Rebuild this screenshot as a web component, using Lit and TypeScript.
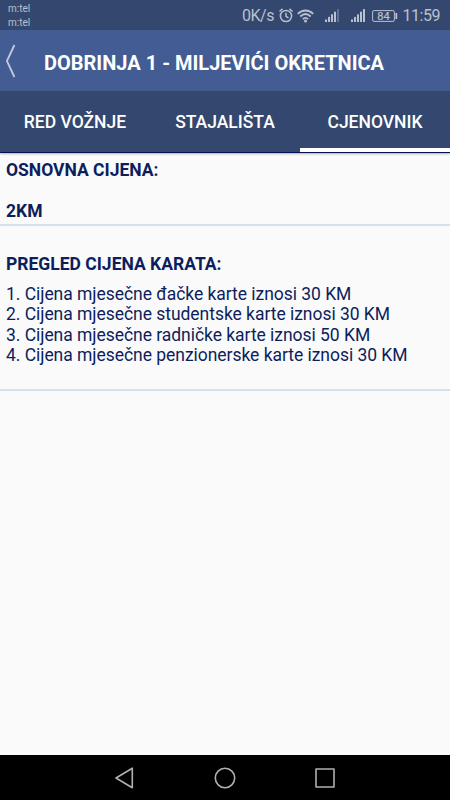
import { LitElement, html, css, svg } from "lit";
import { customElement, property, state } from "lit/decorators.js";
import { classMap } from "lit/directives/class-map.js";

@customElement("status-bar")
class StatusBar extends LitElement {
  static styles = css`
    :host { display: flex; height: 30px; background: #34486f; color: #b9c1d0; justify-content: space-between; box-sizing: border-box; padding: 0 10px 0 8px; }
    .carriers { font-size: 10px; line-height: 14px; padding-top: 2px; }
    .right { display: flex; align-items: center; height: 31px; font-size: 16px; }
    .speed { margin-right: 5.5px; letter-spacing: -0.5px; }
    .alarm { margin-right: 3.5px; }
    .wifi { margin-right: 11.5px; }
    .signal { margin-right: 11px; }
    .signal.full { margin-right: 5.5px; }
    .battery { margin-right: 4.5px; }
    svg { display: block; }
    .num { font-size: 11px; }
    .clock { letter-spacing: -0.45px; }
  `;
  bars(solid: number) {
    return svg`${[0, 1, 2, 3, 4].map(
      (i) => svg`<rect x=${i * 3} y=${10.5 - i * 2.6} width="2" height=${2.5 + i * 2.6} fill="#b9c1d0" opacity=${i < solid ? 1 : 0.35}></rect>`
    )}`;
  }
  render() {
    return html`
      <div class="carriers"><div>m:tel</div><div>m:tel</div></div>
      <div class="right">
        <span class="speed">0K/s</span>
        <svg class="alarm" width="14" height="15" viewBox="0 0 14 15" fill="none" stroke="#b9c1d0" stroke-width="1.5">
          <circle cx="7" cy="8" r="5.6"></circle>
          <path d="M7 4.8v3.5l2.5 1.6M.5 3.5l3-2.6M13.5 3.5l-3-2.6"></path>
        </svg>
        <svg class="wifi" width="17" height="14" viewBox="0 0 17 14" fill="none" stroke="#b9c1d0" stroke-width="1.8">
          <path d="M.8 4.8C5.3.4 11.7.4 16.2 4.8M3.3 7.5c3.2-3.1 7.2-3.1 10.4 0M5.8 10.1c1.7-1.6 3.7-1.6 5.4 0"></path>
          <circle cx="8.5" cy="12" r="1.5" fill="#b9c1d0" stroke="none"></circle>
        </svg>
        <svg class="signal" width="15" height="13" viewBox="0 0 15 13">${this.bars(4)}</svg>
        <svg class="signal full" width="15" height="13" viewBox="0 0 15 13">${this.bars(5)}</svg>
        <svg class="battery" width="26" height="12" viewBox="0 0 26 12">
          <rect x=".6" y=".6" width="21.8" height="10.8" rx="1.5" fill="none" stroke="#b9c1d0"></rect>
          <rect x="23.4" y="3" width="1.8" height="6" fill="#b9c1d0"></rect>
          <text class="num" x="11.5" y="9.9" text-anchor="middle" fill="#b9c1d0" stroke="#b9c1d0" stroke-width=".2">84</text>
        </svg>
        <span class="clock">11:59</span>
      </div>`;
  }
}

@customElement("title-bar")
class TitleBar extends LitElement {
  @property() heading = "";
  static styles = css`
    :host { display: flex; align-items: center; height: 61px; background: #435c93; color: #fff; padding-left: 5px; box-sizing: border-box; }
    .back { display: block; margin: 1px 28px 0 0; }
    .heading { font-size: 20px; font-weight: 700; white-space: nowrap; padding-top: 5px; }
  `;
  render() {
    return html`
      <svg class="back" width="11" height="34" viewBox="0 0 11 34" fill="none" stroke="#c3cbdc" stroke-width="1.8">
        <path d="M9.4 1L1.9 17l7.5 16"></path>
      </svg>
      <div class="heading">${this.heading}</div>`;
  }
}

@customElement("tab-strip")
class TabStrip extends LitElement {
  @state() active = 2;
  tabs = ["RED VOŽNJE", "STAJALIŠTA", "CJENOVNIK"];
  static styles = css`
    :host { display: grid; grid-template-columns: repeat(3, 1fr); height: 62px; box-sizing: border-box; background: #34486f; border-bottom: 1px solid #06104f; box-shadow: 0 1px 2px rgba(0, 0, 0, 0.3); }
    .tab { color: #fff; font-size: 17.5px; font-weight: 500; display: flex; align-items: center; justify-content: center; box-sizing: border-box; border-bottom: 4px solid transparent; padding-top: 4px; white-space: nowrap; }
    .active { border-bottom-color: #fff; }
  `;
  render() {
    return this.tabs.map(
      (t, i) => html`<div class=${classMap({ tab: true, active: i === this.active })} @click=${() => (this.active = i)}>${t}</div>`
    );
  }
}

@customElement("nav-bar")
class NavBar extends LitElement {
  static styles = css`
    :host { display: flex; justify-content: center; align-items: center; gap: 78px; height: 45px; background: #000; }
    svg { display: block; }
  `;
  render() {
    const icon = (shape: unknown) =>
      html`<svg width="22" height="22" viewBox="0 0 22 22" fill="none" stroke="#b0b0b0" stroke-width="1.6" stroke-linejoin="round">${shape}</svg>`;
    return html`
      ${icon(svg`<path d="M18.3 1.2v19.6L2 11z"></path>`)}
      ${icon(svg`<circle cx="11" cy="11" r="9.7"></circle>`)}
      ${icon(svg`<rect x="2" y="2" width="18" height="18"></rect>`)}`;
  }
}

@customElement("app-root")
class AppRoot extends LitElement {
  static styles = css`
    :host { display: flex; flex-direction: column; height: 800px; background: #fafafa; font-family: Roboto, sans-serif; color: #0d1e5c; overflow: hidden; }
    .body { flex: 1; font-size: 17.5px; line-height: 20.5px; }
    .section { border-bottom: 2px solid #d8e1ea; padding-left: 6px; box-sizing: border-box; }
    .base { height: 73px; padding-top: 7px; }
    .list { height: 165px; padding-top: 28px; }
    .label { font-weight: 700; }
    .price { margin-top: 20px; }
    .items { margin-top: 9px; letter-spacing: -0.04px; }
  `;
  passes: [string, number][] = [
    ["đačke", 30],
    ["studentske", 30],
    ["radničke", 50],
    ["penzionerske", 30],
  ];
  render() {
    return html`
      <status-bar></status-bar>
      <title-bar heading="DOBRINJA 1 - MILJEVIĆI OKRETNICA"></title-bar>
      <tab-strip></tab-strip>
      <div class="body">
        <div class="section base">
          <div class="label">OSNOVNA CIJENA:</div>
          <div class="label price">2KM</div>
        </div>
        <div class="section list">
          <div class="label">PREGLED CIJENA KARATA:</div>
          <div class="items">
            ${this.passes.map(([kind, price], i) => html`<div>${i + 1}. Cijena mjesečne ${kind} karte iznosi ${price} KM</div>`)}
          </div>
        </div>
      </div>
      <nav-bar></nav-bar>`;
  }
}
